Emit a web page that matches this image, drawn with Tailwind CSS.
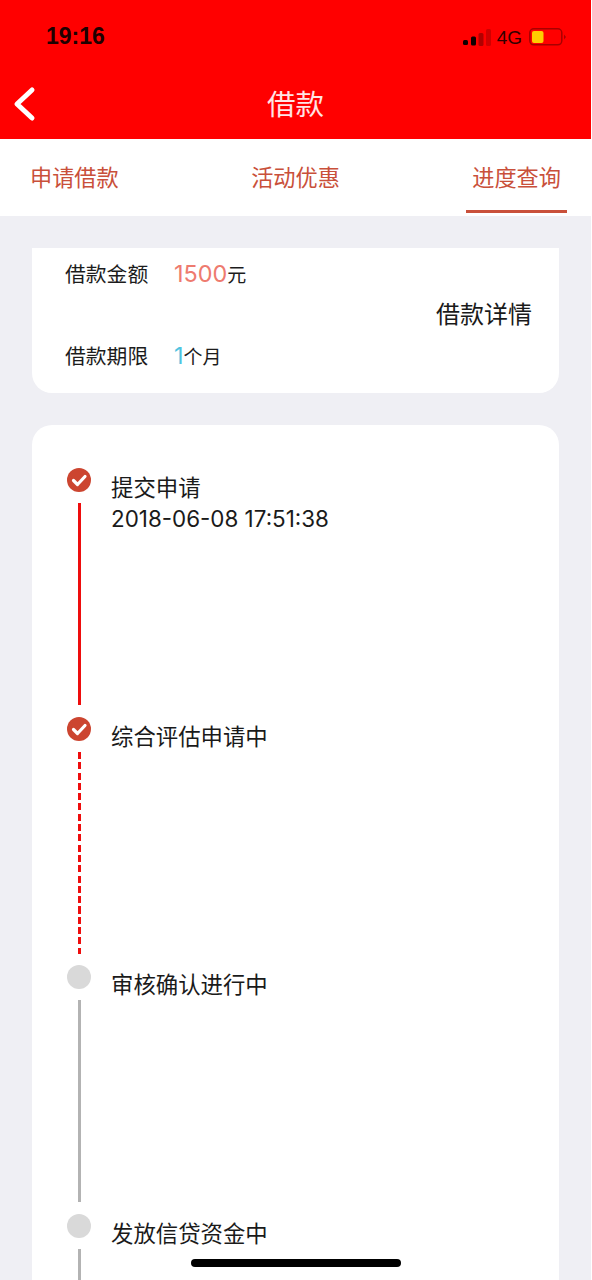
<!DOCTYPE html>
<html lang="zh">
<head>
<meta charset="utf-8">
<script src="https://cdn.jsdelivr.net/npm/@tailwindcss/browser@4"></script>
</head>
<body class="bg-white">
<div class="w-[591px] h-[1280px] relative overflow-hidden bg-[#efeff4] font-['Inter','Noto_Sans_CJK_SC',sans-serif]">
  <header class="h-[139px] bg-[#ff0000] flex flex-col">
    <div class="h-[70px] flex items-center justify-between pl-[46px] pr-[25px] text-black/90">
      <span class="text-[23px] font-bold font-['Liberation_Sans',sans-serif] leading-none mt-[2px]">19:16</span>
      <div class="flex items-center mt-[4px]">
        <svg width="30" height="17" viewBox="0 0 30 17" class="mr-[4px]">
          <rect x="0" y="11" width="5" height="5" rx="1.5" fill="#100000"/>
          <rect x="8" y="7.5" width="5" height="9" rx="1.5" fill="#100000"/>
          <rect x="15.5" y="4" width="5" height="13" rx="1.5" fill="#b00000"/>
          <rect x="23" y="0" width="5" height="17" rx="1.5" fill="#d00000"/>
        </svg>
        <span class="text-[19px] leading-none font-['Liberation_Sans',sans-serif] text-[#300000] mr-[7px]">4G</span>
        <svg width="37" height="18" viewBox="0 0 37 18">
          <rect x="0.8" y="0.8" width="32" height="16" rx="4" fill="none" stroke="#a80000" stroke-width="1.5"/>
          <rect x="3" y="3" width="11.5" height="12" rx="2" fill="#ffcc00"/>
          <path d="M35 6.5 L37 9 L35 11.5 Z" fill="#a80000"/>
        </svg>
      </div>
    </div>
    <div class="h-[69px] relative flex items-center justify-center pt-[2px]">
      <svg width="24" height="36" viewBox="0 0 24 36" class="absolute left-[12px] top-[16px]">
        <path d="M20 4 L5 18 L20 32" fill="none" stroke="#fff" stroke-width="5" stroke-linecap="round" stroke-linejoin="round"/>
      </svg>
      <h1 class="text-[28.5px] leading-none text-white/90 font-normal">借款</h1>
    </div>
  </header>
  <nav class="h-[77px] bg-white relative flex justify-between text-[#c9503a] text-[22.2px] leading-none pl-[30px] pr-[30px] pt-[28px]">
    <span>申请借款</span>
    <span>活动优惠</span>
    <span>进度查询</span>
    <span class="absolute right-[24px] bottom-[3px] w-[101px] h-[3px] bg-[#c9503a]"></span>
  </nav>
  <section class="mt-[32px] ml-[32px] w-[527px] h-[145px] bg-white rounded-b-[20px] relative text-[20.8px] leading-none text-[#1c1c1c]">
    <div class="flex items-baseline pl-[33px] pt-[14px]">
      <span class="w-[109px]">借款金额</span>
      <span class="text-[23.4px] text-[#ee7b6f]">1500</span><span class="text-[19px]">元</span>
    </div>
    <div class="text-right pr-[27px] text-[24px] leading-none mt-[17px] text-[#1a1a1a]">借款详情</div>
    <div class="flex items-baseline pl-[33px] mt-[17px]">
      <span class="w-[109px]">借款期限</span>
      <span class="text-[23.4px] text-[#4fc3e0]">1</span><span class="text-[19px]">个月</span>
    </div>
  </section>
  <section class="mt-[32px] ml-[32px] w-[527px] h-[900px] bg-white rounded-t-[20px] pl-[35px] pt-[43px] text-[22.4px] leading-[31px] text-[#1a1a1a]">
    <div class="flex h-[248.5px]">
      <div class="w-[24px] flex flex-col items-center mr-[20px]">
        <svg width="24" height="24" viewBox="0 0 24 24" class="shrink-0"><circle cx="12" cy="12" r="12" fill="#cc4530"/><path d="M6.5 12.5 L10.5 16.5 L18 8.5" fill="none" stroke="#fff" stroke-width="3.2" stroke-linecap="round" stroke-linejoin="round"/></svg>
        <div class="w-[3px] h-[202px] mt-[11px] bg-[#ee0d0d]"></div>
      </div>
      <div class="pt-[4px]"><p>提交申请</p><p>2018-06-08 17:51:38</p></div>
    </div>
    <div class="flex h-[248.5px]">
      <div class="w-[24px] flex flex-col items-center mr-[20px]">
        <svg width="24" height="24" viewBox="0 0 24 24" class="shrink-0"><circle cx="12" cy="12" r="12" fill="#cc4530"/><path d="M6.5 12.5 L10.5 16.5 L18 8.5" fill="none" stroke="#fff" stroke-width="3.2" stroke-linecap="round" stroke-linejoin="round"/></svg>
        <div class="w-[3px] h-[202px] mt-[11px] bg-[repeating-linear-gradient(to_bottom,#ee0d0d_0,#ee0d0d_7px,transparent_7px,transparent_10.3px)]"></div>
      </div>
      <div class="pt-[4px]"><p>综合评估申请中</p></div>
    </div>
    <div class="flex h-[248.5px]">
      <div class="w-[24px] flex flex-col items-center mr-[20px]">
        <div class="w-[24px] h-[24px] shrink-0 rounded-full bg-[#d9d9d9]"></div>
        <div class="w-[3px] h-[202px] mt-[11px] bg-[#b3b3b3]"></div>
      </div>
      <div class="pt-[4px]"><p>审核确认进行中</p></div>
    </div>
    <div class="flex h-[100px]">
      <div class="w-[24px] flex flex-col items-center mr-[20px]">
        <div class="w-[24px] h-[24px] shrink-0 rounded-full bg-[#d9d9d9]"></div>
        <div class="w-[3px] h-[202px] mt-[11px] bg-[#b3b3b3]"></div>
      </div>
      <div class="pt-[4px]"><p>发放信贷资金中</p></div>
    </div>
  </section>
  <div class="absolute left-[191px] top-[1259px] w-[210px] h-[8px] rounded-full bg-black"></div>
</div>
</body>
</html>
